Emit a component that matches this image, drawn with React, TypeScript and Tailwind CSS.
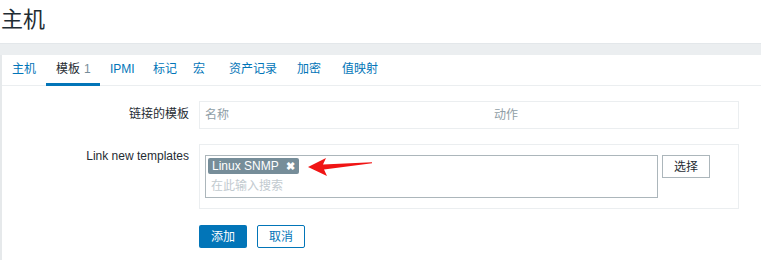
import React from "react";

const tabs = [
  { label: "主机", w: "w-[44px]" },
  { label: "模板", count: "1", active: true, w: "w-[54px]" },
  { label: "IPMI", w: "w-[43px]" },
  { label: "标记", w: "w-[40px]" },
  { label: "宏", w: "w-[36px]" },
  { label: "资产记录", w: "w-[68px]" },
  { label: "加密", w: "w-[45px]" },
  { label: "值映射", w: "w-[56px]" },
];

export default function App() {
  return (
    <div className="relative w-[761px] h-[260px] overflow-hidden bg-white text-[12px] text-[#1f2c33] font-['Liberation_Sans','Noto_Sans_CJK_SC',sans-serif]">
      {/* header */}
      <div className="h-[43px] flex items-center pl-[1px] pb-[3px]">
        <h1 className="text-[22px] leading-none font-normal text-[#1f2c33]">主机</h1>
      </div>
      <div className="h-[12px] bg-[#ebeef0] border-t border-[#e3e7ea]" />

      {/* panel */}
      <div className="border-l-2 border-[#e6e9eb] h-[205px]">
        {/* tabs */}
        <div className="flex h-[31px] border-b border-[#ebeef0]">
          {tabs.map((t) => (
            <div
              key={t.label}
              className={
                (t.active
                  ? "h-[31px] -mb-px pl-[10px] flex items-center border-b-[3px] border-[#0275b8] text-[#1f2c33] "
                  : "h-[31px] -mb-px pl-[10px] flex items-center border-b-[3px] border-transparent text-[#0275b8] ") + t.w
              }
            >
              <span className="whitespace-nowrap">{t.label}</span>
              {t.count && <span className="ml-[4px] text-[#768d99]">{t.count}</span>}
            </div>
          ))}
        </div>

        {/* form */}
        <div className="pt-[15px] flex flex-col">
          {/* row 1 */}
          <div className="flex">
            <div className="w-[187px] text-right pt-[6px] leading-[14px]">链接的模板</div>
            <div className="ml-[10px] w-[540px] h-[28px] border border-[#ebeef0] flex items-center text-[#8f9ea6]">
              <div className="w-[294px] pl-[5px]">名称</div>
              <div>动作</div>
            </div>
          </div>

          {/* row 2 */}
          <div className="flex mt-[15px]">
            <div className="w-[187px] text-right pt-[5px] leading-[14px]">Link new templates</div>
            <div className="ml-[10px] w-[540px] h-[65px] border border-[#ebeef0] pl-[5px] pt-[10px] flex items-start">
              <div className="w-[453px] h-[43px] border border-[#acb6bb] pl-[2px] pt-[2px] flex flex-col">
                <div className="self-start h-[16px] bg-[#768d99] text-white flex items-center pl-[4px] pr-[4px] rounded-[2px] leading-none">
                  <span>Linux SNMP</span>
                  <span className="ml-[7px] text-[11px] font-bold">✖</span>
                </div>
                <div className="pl-[3px] mt-[5px] text-[#c2cacf] leading-[14px]">在此输入搜索</div>
              </div>
              <button className="ml-[4px] w-[48px] h-[23px] border border-[#acb6bb] bg-white text-[#1f2c33] flex items-center justify-center">
                选择
              </button>
            </div>
          </div>

          {/* buttons */}
          <div className="flex mt-[16px] pl-[197px] gap-[10px]">
            <button className="w-[48px] h-[23px] bg-[#0275b8] text-white rounded-[2px] flex items-center justify-center">
              添加
            </button>
            <button className="w-[48px] h-[23px] border border-[#0275b8] bg-white text-[#0275b8] rounded-[2px] flex items-center justify-center">
              取消
            </button>
          </div>
        </div>
      </div>

      {/* red arrow annotation */}
      <svg className="absolute left-[306px] top-[155px]" width="70" height="24" viewBox="0 0 70 24">
        <path
          d="M2 12 L20 3 L17 9.5 L66 7.2 L66 8.2 L18 14.5 L21 21 Z"
          fill="#f01414"
        />
      </svg>
    </div>
  );
}
